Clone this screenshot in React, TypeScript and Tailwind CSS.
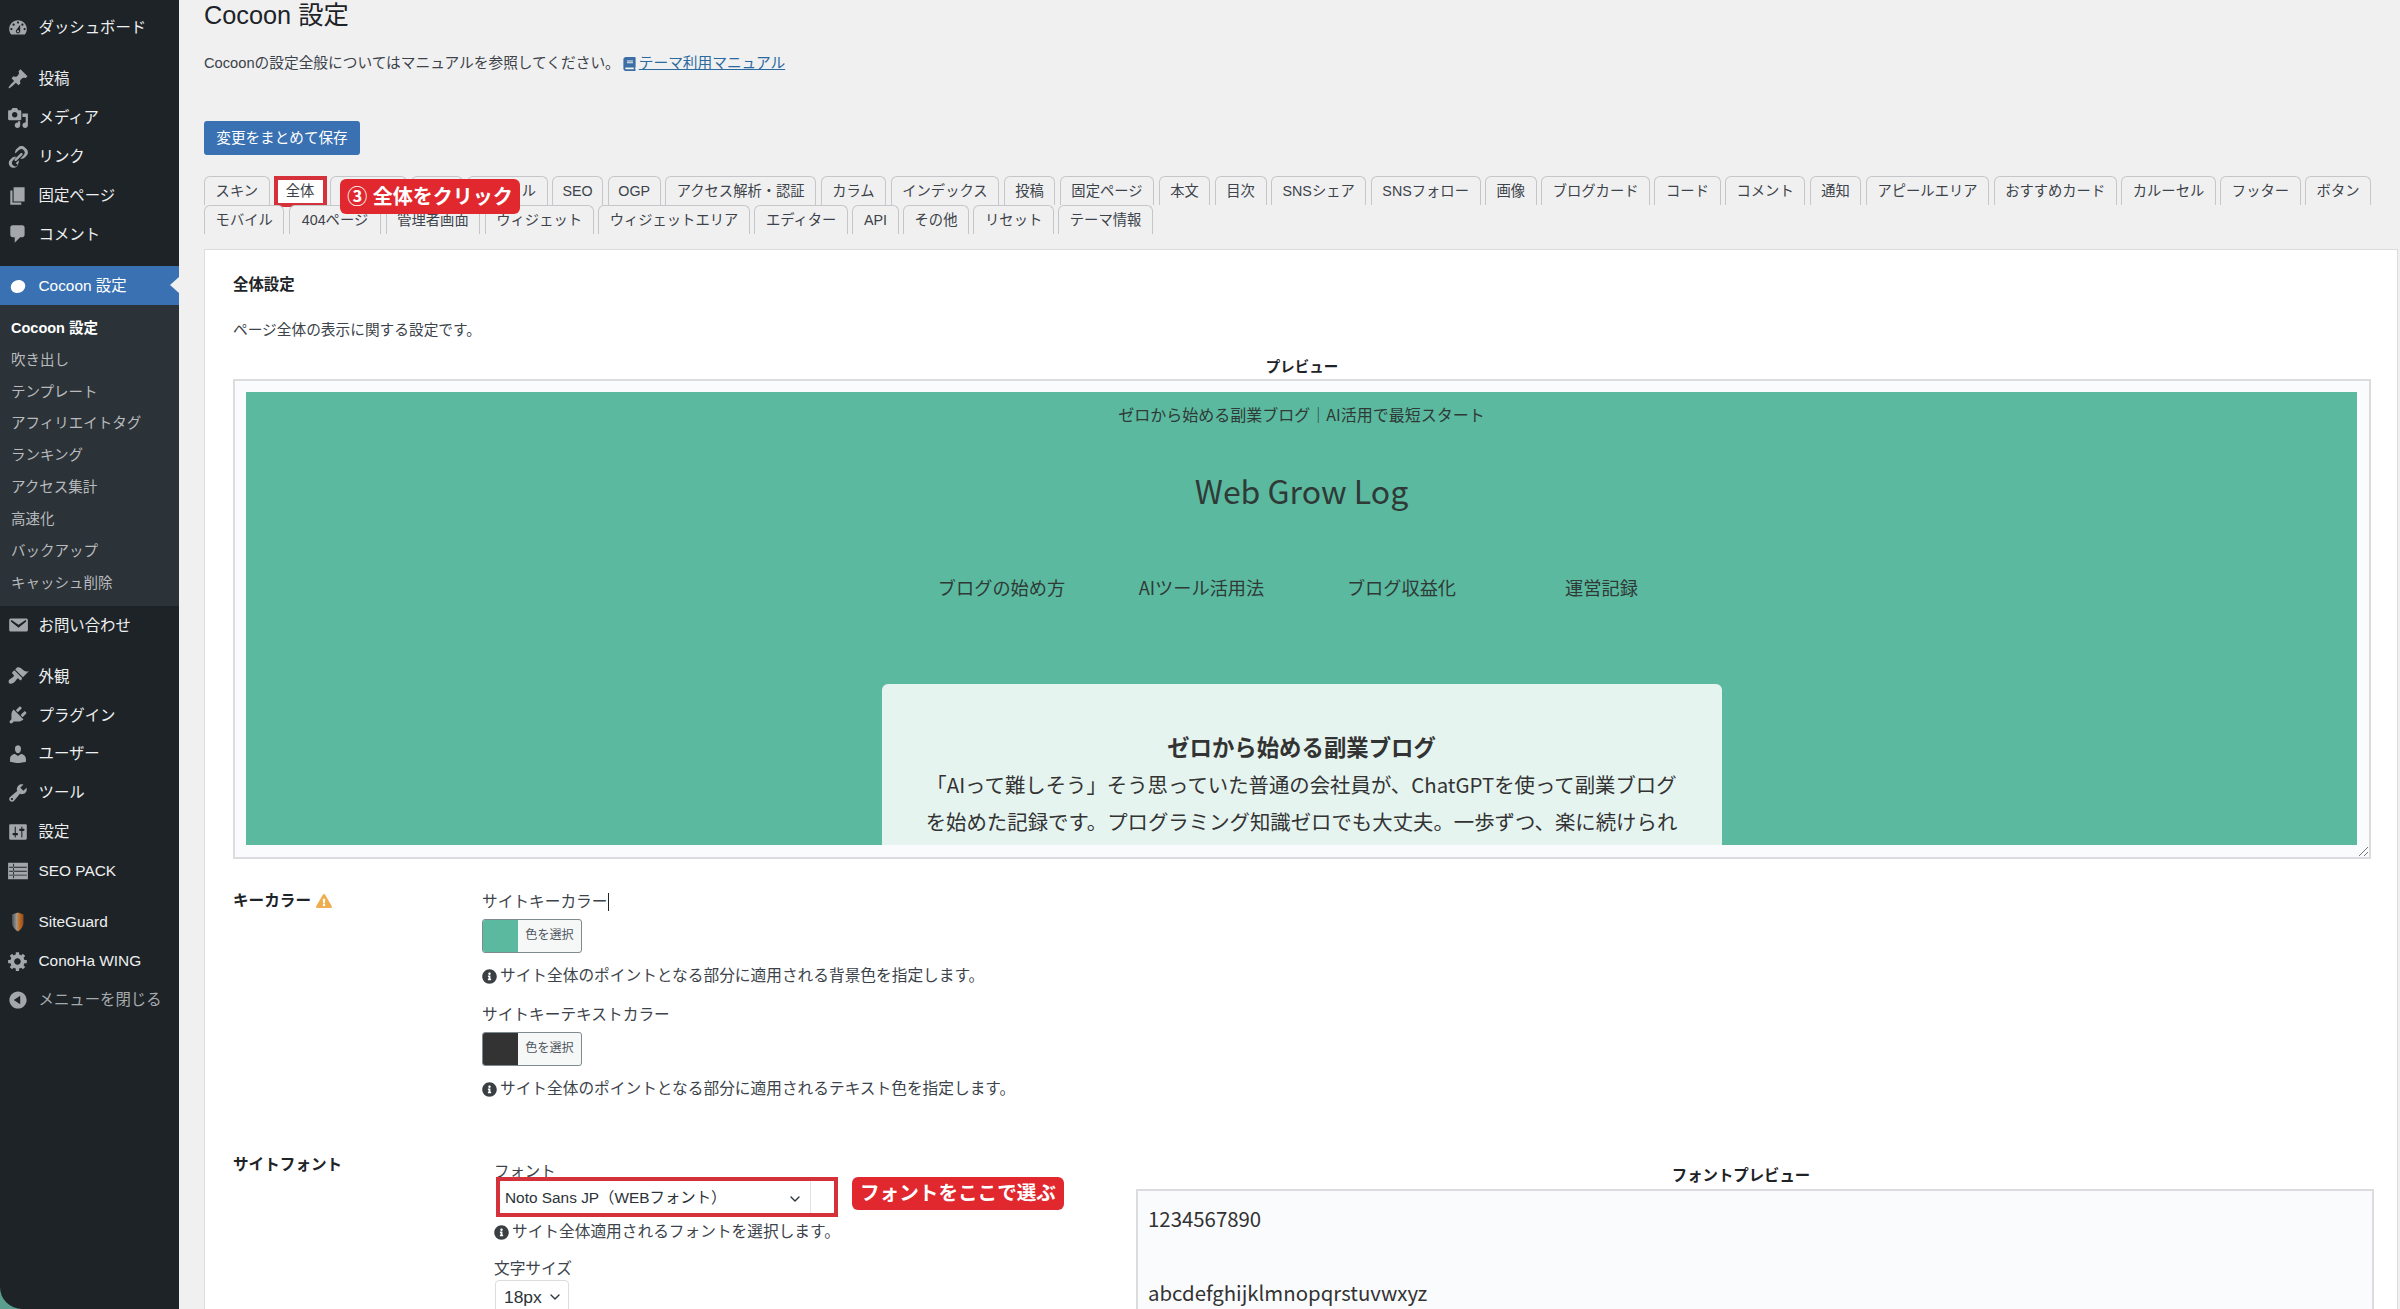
import React from "react";
import { FaInfoCircle, FaExclamationTriangle, FaBook } from "react-icons/fa";
import { ChevronDown } from "lucide-react";

const P: Record<string, string> = {
  dashboard: "M3.76 16h12.48c1.1-1.37 1.76-3.11 1.76-5 0-4.42-3.58-8-8-8s-8 3.58-8 8c0 1.89.66 3.63 1.76 5zM10 4c.55 0 1 .45 1 1s-.45 1-1 1-1-.45-1-1 .45-1 1-1zM6 6c.55 0 1 .45 1 1s-.45 1-1 1-1-.45-1-1 .45-1 1-1zm8 0c.55 0 1 .45 1 1s-.45 1-1 1-1-.45-1-1 .45-1 1-1zm-5.37 5.55L12 7v6c0 1.1-.9 2-2 2s-2-.9-2-2c0-.57.24-1.08.63-1.45zM4 10c.55 0 1 .45 1 1s-.45 1-1 1-1-.45-1-1 .45-1 1-1zm12 0c.55 0 1 .45 1 1s-.45 1-1 1-1-.45-1-1 .45-1 1-1zm-5 3c0-.55-.45-1-1-1s-1 .45-1 1 .45 1 1 1 1-.45 1-1z",
  post: "M10.44 3.02l1.82-1.82 6.36 6.35-1.83 1.82c-1.05-.68-2.48-.57-3.41.36l-.75.75c-.92.93-1.04 2.35-.35 3.41l-1.83 1.82-2.41-2.41-2.8 2.79c-.42.42-3.38 2.71-3.8 2.29s1.86-3.39 2.28-3.81l2.79-2.79L4.1 9.36l1.83-1.82c1.05.69 2.48.57 3.4-.36l.75-.75c.93-.92 1.05-2.35.36-3.41z",
  media: "M13 11V4c0-.55-.45-1-1-1h-1.67L9 1H5L3.67 3H2c-.55 0-1 .45-1 1v7c0 .55.45 1 1 1h10c.55 0 1-.45 1-1zM7 4.5c1.38 0 2.5 1.12 2.5 2.5S8.38 9.5 7 9.5 4.5 8.38 4.5 7 5.62 4.5 7 4.5zM14 6h5v10.5c0 1.38-1.12 2.5-2.5 2.5S14 17.88 14 16.5s1.12-2.5 2.5-2.5c.17 0 .34.02.5.05V9h-3V6zm-4 8.05V13h2v3.5c0 1.38-1.12 2.5-2.5 2.5S7 17.88 7 16.5 8.12 14 9.5 14c.17 0 .34.02.5.05z",
  links: "M17.74 2.76c1.68 1.69 1.68 4.41 0 6.1l-1.53 1.52c-1.12 1.12-2.7 1.49-4.13 1.11l2.79-2.78c.55-.55.96-1.24 1.15-2.01.38-.81.09-1.95-.84-2.87-.92-.93-2.05-1.22-2.87-.84-.76.19-1.46.6-2.01 1.15l-2.78 2.79c-.38-1.43-.01-3.01 1.11-4.13l1.52-1.53c1.69-1.68 4.42-1.68 6.1 0zM8.59 13.43l5.34-5.34c.42-.42.42-1.1 0-1.52-.44-.43-1.13-.39-1.53 0l-5.33 5.34c-.42.42-.42 1.1 0 1.52.44.43 1.13.39 1.52 0zm-.76 2.29l2.78-2.79c.38 1.43.01 3.01-1.11 4.13L8.97 18.6c-1.69 1.68-4.42 1.68-6.1 0-1.68-1.69-1.68-4.42 0-6.1l1.53-1.52c1.12-1.12 2.7-1.49 4.13-1.11l-2.79 2.78c-.55.55-.96 1.24-1.15 2.01-.38.81-.09 1.95.84 2.87.92.93 2.05 1.22 2.87.84.76-.19 1.46-.6 2.01-1.15z",
  page: "M6 15V2h10v13H6zm-1 1h8v2H3V5h2v11z",
  comments: "M5 2h9c1.1 0 2 .9 2 2v7c0 1.1-.9 2-2 2h-2l-5 5v-5H5c-1.1 0-2-.9-2-2V4c0-1.1.9-2 2-2z",
  email: "M3.87 4h13.25C18.37 4 19 4.59 19 5.79v8.42c0 1.19-.63 1.79-1.88 1.79H3.87c-1.25 0-1.88-.6-1.88-1.79V5.79c0-1.2.63-1.79 1.88-1.79zm6.62 8.6l6.74-5.53c.24-.2.43-.66.13-1.07-.29-.41-.82-.42-1.17-.17l-5.7 3.86L4.8 5.83c-.35-.25-.88-.24-1.17.17-.3.41-.11.87.13 1.07z",
  appearance: "M14.48 11.06L7.41 3.99l1.5-1.5c.5-.56 2.3-.47 3.51.32 1.21.8 1.43 1.28 2.91 2.1 1.18.64 2.45 1.26 4.45.85zm-.71.71L6.7 4.7 4.93 6.47c-.39.39-.39 1.02 0 1.41l1.06 1.06c.39.39.39 1.03 0 1.42-.6.6-1.43 1.11-2.21 1.69-.35.26-.7.53-1.01.84C1.43 13.23 1 15.46 2.03 16.5c1.03 1.03 3.27.6 4.62-.76.31-.31.58-.66.84-1.01.58-.78 1.09-1.61 1.69-2.21.39-.39 1.03-.39 1.42 0l1.06 1.06c.39.39 1.02.39 1.41 0z",
  plugins: "M13.11 4.36L9.87 7.6 8 5.73l3.24-3.24c.35-.34 1.05-.2 1.56.32.52.51.66 1.21.31 1.55zm-8 1.77l.91-1.12 9.01 9.01-1.19.84c-.71.71-2.63 1.16-3.82 1.16H6.14L4.9 17.26c-.59.59-1.54.59-2.12 0-.59-.58-.59-1.53 0-2.12l1.24-1.24v-3.88c0-1.13.4-3.19 1.09-3.89zm7.26 3.97l3.24-3.24c.34-.35 1.04-.21 1.55.31.52.51.66 1.21.31 1.55l-3.24 3.25z",
  users: "M10 9.25c-2.27 0-2.73-3.44-2.73-3.44C7 4.02 7.82 2 9.97 2c2.16 0 2.98 2.02 2.71 3.81 0 0-.41 3.44-2.68 3.44zm0 2.57L12.72 10c2.39 0 4.52 2.33 4.52 4.53v2.49s-3.65 1.13-7.24 1.13c-3.65 0-7.24-1.13-7.24-1.13v-2.49c0-2.25 1.94-4.48 4.47-4.48z",
  tools: "M16.68 9.77c-1.34 1.34-3.3 1.67-4.95.99l-5.41 6.52c-.99.99-2.59.99-3.58 0s-.99-2.59 0-3.57l6.52-5.42c-.68-1.65-.35-3.61.99-4.95 1.28-1.28 3.12-1.62 4.72-1.06l-2.89 2.89 2.82 2.82 2.86-2.87c.53 1.58.18 3.39-1.08 4.65zM3.81 16.21c.4.39 1.04.39 1.43 0 .4-.4.4-1.04 0-1.43-.39-.4-1.03-.4-1.43 0-.39.39-.39 1.03 0 1.43z",
  settings: "M18 16V4c0-.55-.45-1-1-1H3c-.55 0-1 .45-1 1v12c0 .55.45 1 1 1h14c.55 0 1-.45 1-1zM8 11h1c.55 0 1 .45 1 1s-.45 1-1 1H8v1.5c0 .28-.22.5-.5.5s-.5-.22-.5-.5V13H6c-.55 0-1-.45-1-1s.45-1 1-1h1V5.5c0-.28.22-.5.5-.5s.5.22.5.5V11zm5-2h-1c-.55 0-1-.45-1-1s.45-1 1-1h1V5.5c0-.28.22-.5.5-.5s.5.22.5.5V7h1c.55 0 1 .45 1 1s-.45 1-1 1h-1v5.5c0 .28-.22.5-.5.5s-.5-.22-.5-.5V9z",
  seo: "M1 2.5h18v15H1zM2 6.2v.8h16v-.8zM2 9.8v.8h16v-.8zM2 13.4v.8h16v-.8zM5.6 3.4v13.2h.8V3.4z",
  generic: "M18 12h-2.18c-.17.7-.44 1.35-.81 1.93l1.54 1.54-2.1 2.1-1.54-1.54c-.58.36-1.23.63-1.91.79V19H8v-2.18c-.68-.16-1.33-.43-1.91-.79l-1.54 1.54-2.12-2.12 1.54-1.54c-.36-.58-.63-1.23-.79-1.91H1V9.03h2.17c.16-.7.44-1.35.8-1.94L2.43 5.55l2.1-2.1 1.54 1.54c.58-.37 1.24-.64 1.93-.81V2h3v2.18c.68.16 1.33.43 1.91.79l1.54-1.54 2.12 2.12-1.54 1.54c.36.59.64 1.24.8 1.94H18V12zm-8.5 1.5c1.66 0 3-1.34 3-3s-1.34-3-3-3-3 1.34-3 3 1.34 3 3 3z",
  collapse: "M10 2.16c4.33 0 7.84 3.51 7.84 7.84s-3.51 7.84-7.84 7.84S2.16 14.33 2.16 10 5.71 2.16 10 2.16zm2 11.72V6.12L6.18 9.97z",
};

function DashIcon({ name }: { name: string }) {
  return (
    <svg viewBox="0 0 20 20" className="w-[22px] h-[22px] fill-[#a3a7ab] shrink-0" fillRule="evenodd">
      <path d={P[name]} />
    </svg>
  );
}

function CocoonIcon() {
  return (
    <svg viewBox="0 0 22 22" className="w-[22px] h-[22px] shrink-0">
      <ellipse cx="11" cy="11.5" rx="7.4" ry="6.4" transform="rotate(-25 11 11.5)" fill="#fff" />
    </svg>
  );
}

function ShieldIcon() {
  return (
    <svg viewBox="0 0 22 22" className="w-[22px] h-[22px] shrink-0">
      <defs>
        <linearGradient id="sg" x1="0" x2="1" y1="0" y2="0">
          <stop offset="0" stopColor="#4b4f52" />
          <stop offset="0.4" stopColor="#9a9a9a" />
          <stop offset="0.55" stopColor="#c9782e" />
          <stop offset="1" stopColor="#8d4a1c" />
        </linearGradient>
      </defs>
      <path d="M5 3.5 11 1.5 16.5 3.5V11.5C16.5 15.5 13.5 19 11 20.5 8 19 5 15.5 5 11.5Z" fill="url(#sg)" />
    </svg>
  );
}

function MenuItem({ icon, label, dim }: { icon: React.ReactNode; label: string; dim?: boolean }) {
  return (
    <div className="h-[38.9px] flex items-center pl-[7px]">
      <span className="w-[31.5px] flex shrink-0">{icon}</span>
      <span className={"text-[15.4px] whitespace-nowrap " + (dim ? "text-[#a7aaad]" : "text-[#eeeff0]")}>{label}</span>
    </div>
  );
}

const submenu = ["吹き出し", "テンプレート", "アフィリエイトタグ", "ランキング", "アクセス集計", "高速化", "バックアップ", "キャッシュ削除"];

function Sidebar() {
  return (
    <aside className="w-[178.5px] shrink-0 h-[1309px] bg-[#1d2327] rounded-bl-[22px] pt-[8.5px] overflow-hidden">
      <MenuItem icon={<DashIcon name="dashboard" />} label="ダッシュボード" />
      <div className="h-[12px]" />
      <MenuItem icon={<DashIcon name="post" />} label="投稿" />
      <MenuItem icon={<DashIcon name="media" />} label="メディア" />
      <MenuItem icon={<DashIcon name="links" />} label="リンク" />
      <MenuItem icon={<DashIcon name="page" />} label="固定ページ" />
      <MenuItem icon={<DashIcon name="comments" />} label="コメント" />
      <div className="h-[12.5px]" />
      <div className="relative h-[39px] flex items-center pl-[7px] bg-[#3a71b3]">
        <span className="w-[31.5px] flex shrink-0"><CocoonIcon /></span>
        <span className="text-[15.4px] text-white whitespace-nowrap">Cocoon 設定</span>
        <span className="absolute right-0 top-[11px] w-0 h-0 border-y-[8.5px] border-y-transparent border-r-[9px] border-r-[#f0f0f1]" />
      </div>
      <div className="bg-[#2c3338] pt-[7.5px] pl-[11px] h-[300.5px] text-[14.5px] leading-[31.85px] text-[#b8babd]">
        <div className="font-bold text-white">Cocoon 設定</div>
        {submenu.map((s) => (
          <div key={s} className="whitespace-nowrap">{s}</div>
        ))}
      </div>
      <MenuItem icon={<DashIcon name="email" />} label="お問い合わせ" />
      <div className="h-[12px]" />
      <MenuItem icon={<DashIcon name="appearance" />} label="外観" />
      <MenuItem icon={<DashIcon name="plugins" />} label="プラグイン" />
      <MenuItem icon={<DashIcon name="users" />} label="ユーザー" />
      <MenuItem icon={<DashIcon name="tools" />} label="ツール" />
      <MenuItem icon={<DashIcon name="settings" />} label="設定" />
      <MenuItem icon={<DashIcon name="seo" />} label="SEO PACK" />
      <div className="h-[12.5px]" />
      <MenuItem icon={<ShieldIcon />} label="SiteGuard" />
      <MenuItem icon={<DashIcon name="generic" />} label="ConoHa WING" />
      <MenuItem icon={<DashIcon name="collapse" />} label="メニューを閉じる" dim />
    </aside>
  );
}

const tabs = ["スキン", "全体", "ヘッダー", "広告", "タイトル", "SEO", "OGP", "アクセス解析・認証", "カラム", "インデックス", "投稿", "固定ページ", "本文", "目次", "SNSシェア", "SNSフォロー", "画像", "ブログカード", "コード", "コメント", "通知", "アピールエリア", "おすすめカード", "カルーセル", "フッター", "ボタン", "モバイル", "404ページ", "管理者画面", "ウィジェット", "ウィジェットエリア", "エディター", "API", "その他", "リセット", "テーマ情報"];

function tabPad(t: string) {
  if (t === "ヘッダー") return "px-[8.6px]";
  if (t === "SEO" || t === "OGP") return "px-[9.6px]";
  if (t === "404ページ") return "px-[12px]";
  return "px-[10.6px]";
}

function Tabs() {
  return (
    <div className="relative mt-[21px] flex flex-wrap gap-x-[4.4px]">
      {tabs.map((t) => (
        <div
          key={t}
          className={
            "relative h-[29px] border border-b-0 border-[#c5c6c9] rounded-t-[6px] text-[14.3px] leading-[28px] text-[#3c434a] whitespace-nowrap " +
            tabPad(t) + " " +
            (t === "全体" ? "bg-white" : "bg-[#f0f0f1]")
          }
        >
          {t}
          {t === "全体" && <span className="absolute -left-px -top-px w-[53px] h-[31px] border-[4px] border-[#d5313a]" />}
        </div>
      ))}
      <div className="absolute left-[136px] top-[3px] w-[180px] h-[35px] rounded-[6px] bg-[#e1282f] text-white font-bold text-[20px] leading-[36px] text-center whitespace-nowrap">
        ③ 全体をクリック
      </div>
    </div>
  );
}

function ColorButton({ swatch }: { swatch: string }) {
  return (
    <div className="mt-[6px] w-[100px] h-[34px] flex rounded-[3px] border border-[#7d8a90] overflow-hidden bg-[#f6f7f7]">
      <span className={"w-[35px] " + swatch} />
      <span className="flex-1 text-center text-[12.1px] leading-[31px] text-[#50575e]">色を選択</span>
    </div>
  );
}

function Note({ children, className }: { children: React.ReactNode; className: string }) {
  return (
    <div className={"flex items-center h-[22px] text-[#3c434a] " + className}>
      <FaInfoCircle className="w-[15px] h-[15px] mr-[3px] text-[#3a3f44] shrink-0" />
      <span className="text-[15.7px] whitespace-nowrap">{children}</span>
    </div>
  );
}

function Preview() {
  return (
    <div className="relative mt-[3px] h-[480px] border-2 border-[#dcdcde] bg-[#fafbfd] pt-[11px] pl-[11px] pr-[12px] pb-[12px]">
      <div className="h-[453px] bg-[#5bb99f] overflow-hidden text-[#2f3a37] [font-family:'Noto_Sans_CJK_JP',sans-serif]">
        <div className="pt-[11px] text-center text-[16px] leading-[22px]">ゼロから始める副業ブログ｜AI活用で最短スタート</div>
        <div className="mt-[40px] text-center text-[32px] leading-[50px]">Web Grow Log</div>
        <div className="mt-[57px] flex justify-center text-[18.2px] leading-[30px]">
          {["ブログの始め方", "AIツール活用法", "ブログ収益化", "運営記録"].map((n) => (
            <div key={n} className="w-[200px] text-center whitespace-nowrap">{n}</div>
          ))}
        </div>
        <div className="mt-[82px] mx-auto w-[840px] h-[200px] rounded-t-[6px] bg-[#e6f4f0] text-center pt-[46px] text-[#333] whitespace-nowrap">
          <div className="text-[22.4px] font-bold leading-[32px]">ゼロから始める副業ブログ</div>
          <div className="mt-[4px] text-[20.4px] leading-[37px]">
            「AIって難しそう」そう思っていた普通の会社員が、ChatGPTを使って副業ブログ
            <br />
            を始めた記録です。プログラミング知識ゼロでも大丈夫。一歩ずつ、楽に続けられ
          </div>
        </div>
      </div>
      <svg viewBox="0 0 12 12" className="absolute right-0 bottom-0 w-[12px] h-[12px] stroke-[#777]">
        <path d="M2 11 11 2M7 11 11 7" />
      </svg>
    </div>
  );
}

function Panel() {
  return (
    <div className="mt-[15px] bg-white border border-[#dcdcde] pl-[28px] pr-[26px] pt-[25px] h-[1100px]">
      <div className="text-[15.4px] font-bold leading-[20px] text-[#1d2327]">全体設定</div>
      <div className="mt-[25px] text-[14.7px] leading-[20px] text-[#3c434a]">ページ全体の表示に関する設定です。</div>
      <div className="mt-[18px] text-center text-[14.5px] font-bold leading-[18px] text-[#1d2327]">プレビュー</div>
      <Preview />

      <div className="mt-[31px] flex">
        <div className="w-[249px] shrink-0 flex items-center h-[22px] text-[15.6px] font-bold text-[#1d2327]">
          キーカラー
          <FaExclamationTriangle className="ml-[5px] w-[16px] h-[14px] text-[#f0ad4e]" />
        </div>
        <div className="pt-px">
          <div className="flex items-center h-[22px] text-[15.7px] text-[#3c434a]">
            サイトキーカラー<span className="w-px h-[18px] bg-[#222]" />
          </div>
          <ColorButton swatch="bg-[#5bb99f]" />
          <Note className="mt-[12px]">サイト全体のポイントとなる部分に適用される背景色を指定します。</Note>
          <div className="mt-[17px] h-[22px] leading-[22px] text-[15.7px] text-[#3c434a]">サイトキーテキストカラー</div>
          <ColorButton swatch="bg-[#333333]" />
          <Note className="mt-[12px]">サイト全体のポイントとなる部分に適用されるテキスト色を指定します。</Note>
        </div>
      </div>

      <div className="mt-[55px] flex">
        <div className="w-[261px] shrink-0 h-[22px] leading-[20px] text-[15.6px] font-bold text-[#1d2327]">サイトフォント</div>
        <div className="w-[642px] shrink-0">
          <div className="mt-[7px] h-[20px] leading-[20px] text-[15.4px] text-[#3c434a]">フォント</div>
          <div className="-mt-[5px] ml-[2px] flex items-start relative">
            <div className="w-[342px] h-[40px] border-[4px] border-[#d5313a] bg-white flex items-center pl-[5px] pt-[1px] text-[15.4px] text-[#2c3338] relative">
              Noto Sans JP（WEBフォント）
              <ChevronDown className="absolute right-[31px] top-[10px] w-[16px] h-[16px] text-[#2c3338]" />
              <span className="absolute right-[23px] top-0 bottom-0 w-px bg-[#e3e3e5]" />
            </div>
            <div className="ml-[14px] w-[212px] h-[33px] rounded-[6px] bg-[#e1282f] text-white font-bold text-[19.6px] leading-[32px] text-center whitespace-nowrap">
              フォントをここで選ぶ
            </div>
          </div>
          <Note className="mt-[4px]">サイト全体適用されるフォントを選択します。</Note>
          <div className="mt-[15px] h-[22px] leading-[22px] text-[15.7px] text-[#3c434a]">文字サイズ</div>
          <div className="ml-px w-[74px] h-[40px] border border-[#dcdcde] rounded-[4px] bg-white flex items-start pl-[8px] pt-[3px] text-[17.4px] leading-[26px] text-[#2c3338]">
            18px
            <ChevronDown className="ml-[5px] mt-[5px] w-[16px] h-[16px]" />
          </div>
        </div>
        <div className="flex-1 -mr-[3px]">
          <div className="mt-[12px] pr-[28px] text-center text-[15.4px] font-bold leading-[18px] text-[#1d2327]">フォントプレビュー</div>
          <div className="mt-[4px] h-[200px] border-2 border-[#dcdcde] bg-[#fafbfd] px-[10px] pt-[12px] text-[20.4px] leading-[30px] text-[#333] [font-family:'Noto_Sans_CJK_JP',sans-serif]">
            <div>1234567890</div>
            <div className="mt-[44px]">abcdefghijklmnopqrstuvwxyz</div>
          </div>
        </div>
      </div>
    </div>
  );
}

export default function App() {
  return (
    <div className="h-[1309px] w-[2400px] overflow-hidden flex bg-[#5a9e8f] [font-family:'Liberation_Sans','Noto_Sans_CJK_JP',sans-serif]">
      <Sidebar />
      <main className="flex-1 bg-[#f0f0f1] pl-[25.5px] pr-[2px] overflow-hidden">
        <h1 className="h-[30px] text-[25.3px] leading-[30px] text-[#1d2327] font-normal">Cocoon 設定</h1>
        <p className="mt-[22.5px] flex items-center h-[22px] text-[14.7px] text-[#3c434a] whitespace-pre">
          Cocoonの設定全般についてはマニュアルを参照してください。
          <FaBook className="w-[13px] h-[14px] ml-[3px] text-[#3a6ea5]" />
          <span className="ml-[3px] text-[#2a6a9e] underline">テーマ利用マニュアル</span>
        </p>
        <div className="mt-[46.5px] w-[156px] h-[34px] rounded-[3px] bg-[#3a71b3] text-white text-[14.6px] leading-[35px] text-center">変更をまとめて保存</div>
        <Tabs />
        <Panel />
      </main>
    </div>
  );
}
